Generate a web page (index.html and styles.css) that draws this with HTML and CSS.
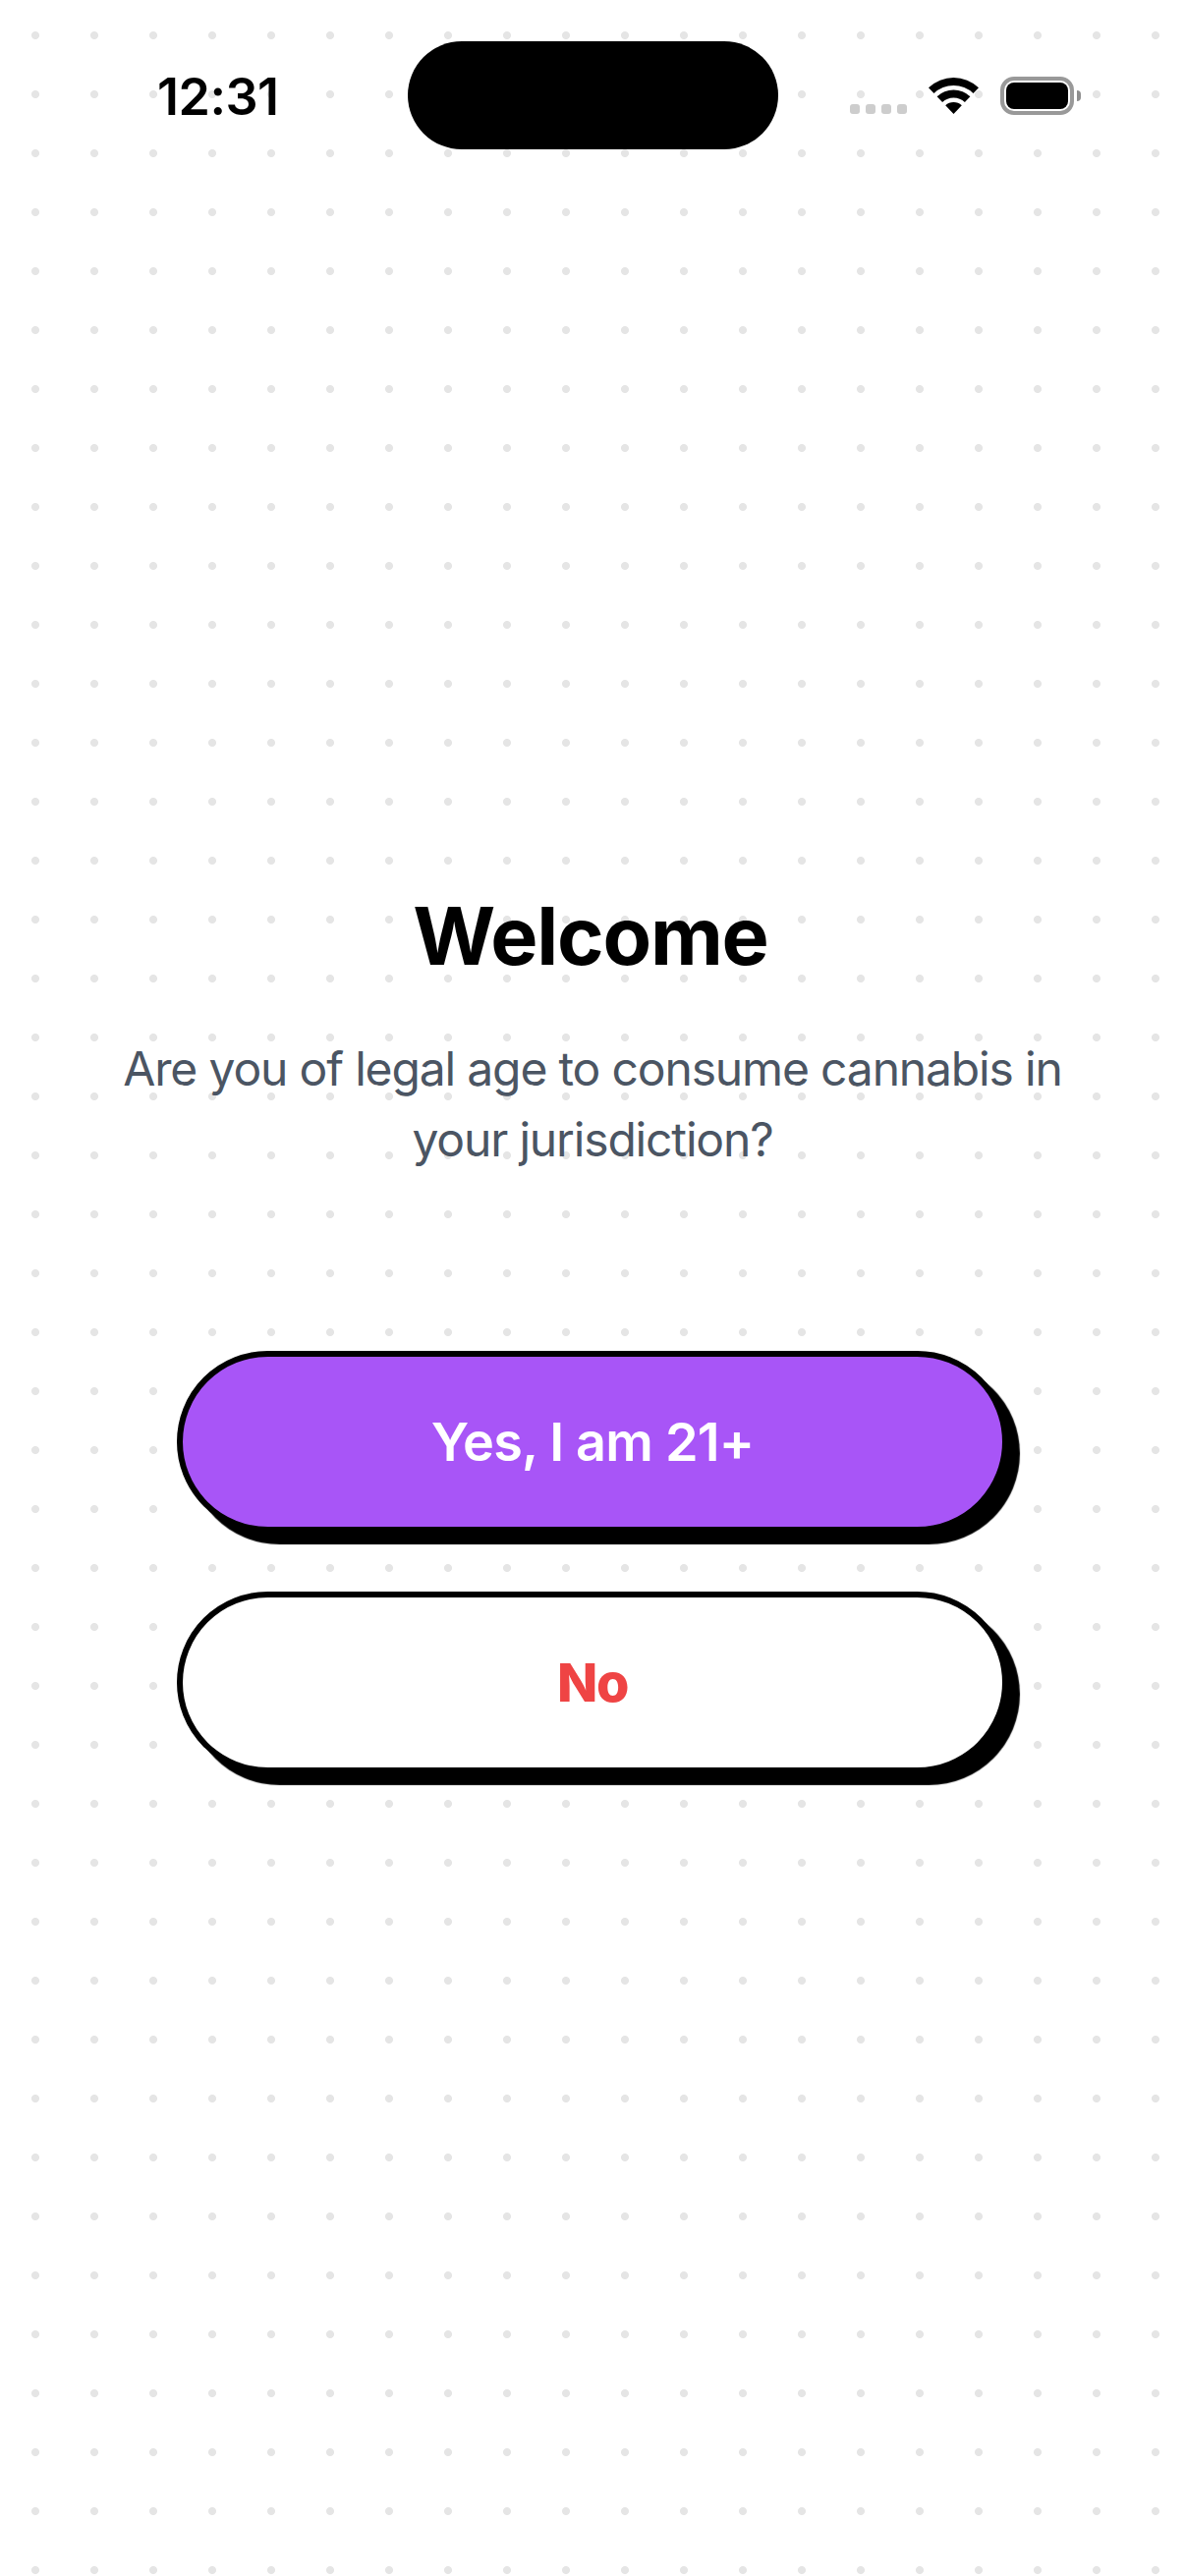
FILE: index.html
```html
<!DOCTYPE html>
<html lang="en">
<head>
<meta charset="utf-8">
<title>Welcome</title>
<link rel="stylesheet" href="styles.css">
</head>
<body>
<div class="screen">
  <header class="status">
    <div class="time">12:31</div>
    <div class="island"></div>
    <div class="indicators">
      <div class="cell"><i></i><i></i><i></i><i></i></div>
      <svg class="wifi" width="51" height="37" viewBox="0 0 51 37">
        <path d="M0 10.2A37 37 0 0 1 51 10.2L45.5 16A29 29 0 0 0 5.5 16Z"/>
        <path d="M8.6 19.3A24.5 24.5 0 0 1 42.4 19.3L36.9 25.1A16.5 16.5 0 0 0 14.1 25.1Z"/>
        <path d="M17.2 28.3A12 12 0 0 1 33.8 28.3L25.5 37Z"/>
      </svg>
      <div class="battery"><div class="level"></div></div>
      <div class="nub"></div>
    </div>
  </header>
  <main class="content">
    <h1 class="title">Welcome</h1>
    <p class="subtitle">Are you of legal age to consume cannabis in your jurisdiction?</p>
    <div class="actions">
      <button class="btn btn-yes">Yes, I am 21+</button>
      <button class="btn btn-no">No</button>
    </div>
  </main>
</div>
</body>
</html>
```
FILE: styles.css
```css
* { box-sizing: border-box; }
html, body { margin: 0; padding: 0; }
body { font-family: Inter, "Liberation Sans", sans-serif; background: #fff; }
.screen {
  width: 1206px;
  height: 2622px;
  overflow: hidden;
  background-color: #fff;
  background-image: radial-gradient(circle at 36px 36px, #e5e5e5 3.6px, rgba(229,229,229,0) 4.4px);
  background-size: 60px 60px;
}
.status {
  height: 156px;
  display: flex;
  padding-top: 42px;
  padding-left: 160px;
}
.time {
  width: 254.5px;
  margin-top: 25px;
  font-size: 52px;
  font-weight: 600;
  line-height: 63px;
  color: #000;
  letter-spacing: -0.5px;
}
.island {
  width: 377px;
  height: 110px;
  border-radius: 55px;
  background: #000;
}
.indicators {
  display: flex;
  align-items: flex-start;
  margin-left: 73.5px;
  padding-top: 36px;
}
.cell { display: flex; gap: 6px; margin-top: 28px; }
.cell i { display: block; width: 10px; height: 10px; border-radius: 3px; background: #cdcdcd; }
.wifi { display: block; margin-left: 22px; fill: #000; margin-top: 1px; }
.battery {
  width: 75px;
  height: 39px;
  margin-left: 22px;
  padding: 2px;
  border: 4px solid #999;
  border-radius: 14px;
}
.level { width: 100%; height: 100%; border-radius: 8px; background: #000; }
.nub {
  width: 4px;
  height: 11px;
  margin-left: 3px;
  margin-top: 14px;
  border-radius: 0 6px 6px 0;
  background: #8e8e8e;
}
.content {
  display: flex;
  flex-direction: column;
  align-items: center;
  padding: 749px 108px 0;
}
.title {
  margin: 0;
  padding-right: 4px;
  font-size: 81px;
  font-weight: 700;
  line-height: 96px;
  letter-spacing: -1.2px;
  color: #000;
  text-align: center;
}
.subtitle {
  margin: 51px 0 0;
  font-size: 48px;
  font-weight: 400;
  line-height: 72px;
  letter-spacing: -1.16px;
  color: #4b5563;
  text-align: center;
}
.actions {
  align-self: stretch;
  display: flex;
  flex-direction: column;
  gap: 60px;
  margin: 179px 72px 0;
}
.btn {
  display: block;
  width: 100%;
  height: 185px;
  border: 6px solid #000;
  border-radius: 93px;
  box-shadow: 12px 12px 1px #000;
  font-family: inherit;
  font-size: 54px;
  letter-spacing: -0.8px;
}
.btn-yes { background: #a855f7; color: #fff; font-weight: 600; }
.btn-no { background: #fff; color: #ef4444; font-weight: 800; letter-spacing: -1.5px; }
```
